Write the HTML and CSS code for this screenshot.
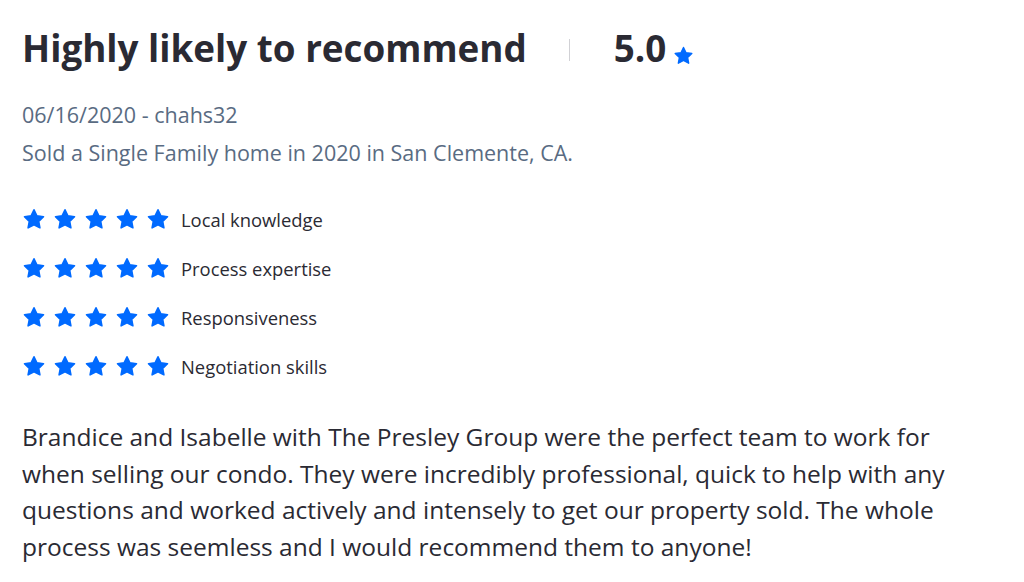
FILE: index.html
```html
<!DOCTYPE html>
<html lang="en">
<head>
<meta charset="utf-8">
<title>Review</title>
<link rel="stylesheet" href="styles.css">
</head>
<body>
<div class="review">
  <div class="head">
    <h1 class="title">Highly likely to recommend</h1>
    <span class="sep"></span>
    <span class="score">5.0</span>
    <svg class="star small" viewBox="0 0 24 24"><path d="M12 2.8l2.9 6 6.6.9-4.8 4.6 1.2 6.5L12 17.7l-5.9 3.1 1.2-6.5-4.8-4.6 6.6-.9z"/></svg>
  </div>
  <div class="meta">
    <div>06/16/2020 - chahs32</div>
    <div>Sold a Single Family home in 2020 in San Clemente, CA.</div>
  </div>
  <ul class="ratings">
    <li><span class="stars"><svg class="star" viewBox="0 0 24 24"><path d="M12 2.8l2.9 6 6.6.9-4.8 4.6 1.2 6.5L12 17.7l-5.9 3.1 1.2-6.5-4.8-4.6 6.6-.9z"/></svg><svg class="star" viewBox="0 0 24 24"><path d="M12 2.8l2.9 6 6.6.9-4.8 4.6 1.2 6.5L12 17.7l-5.9 3.1 1.2-6.5-4.8-4.6 6.6-.9z"/></svg><svg class="star" viewBox="0 0 24 24"><path d="M12 2.8l2.9 6 6.6.9-4.8 4.6 1.2 6.5L12 17.7l-5.9 3.1 1.2-6.5-4.8-4.6 6.6-.9z"/></svg><svg class="star" viewBox="0 0 24 24"><path d="M12 2.8l2.9 6 6.6.9-4.8 4.6 1.2 6.5L12 17.7l-5.9 3.1 1.2-6.5-4.8-4.6 6.6-.9z"/></svg><svg class="star" viewBox="0 0 24 24"><path d="M12 2.8l2.9 6 6.6.9-4.8 4.6 1.2 6.5L12 17.7l-5.9 3.1 1.2-6.5-4.8-4.6 6.6-.9z"/></svg></span><span class="label">Local knowledge</span></li>
    <li><span class="stars"><svg class="star" viewBox="0 0 24 24"><path d="M12 2.8l2.9 6 6.6.9-4.8 4.6 1.2 6.5L12 17.7l-5.9 3.1 1.2-6.5-4.8-4.6 6.6-.9z"/></svg><svg class="star" viewBox="0 0 24 24"><path d="M12 2.8l2.9 6 6.6.9-4.8 4.6 1.2 6.5L12 17.7l-5.9 3.1 1.2-6.5-4.8-4.6 6.6-.9z"/></svg><svg class="star" viewBox="0 0 24 24"><path d="M12 2.8l2.9 6 6.6.9-4.8 4.6 1.2 6.5L12 17.7l-5.9 3.1 1.2-6.5-4.8-4.6 6.6-.9z"/></svg><svg class="star" viewBox="0 0 24 24"><path d="M12 2.8l2.9 6 6.6.9-4.8 4.6 1.2 6.5L12 17.7l-5.9 3.1 1.2-6.5-4.8-4.6 6.6-.9z"/></svg><svg class="star" viewBox="0 0 24 24"><path d="M12 2.8l2.9 6 6.6.9-4.8 4.6 1.2 6.5L12 17.7l-5.9 3.1 1.2-6.5-4.8-4.6 6.6-.9z"/></svg></span><span class="label">Process expertise</span></li>
    <li><span class="stars"><svg class="star" viewBox="0 0 24 24"><path d="M12 2.8l2.9 6 6.6.9-4.8 4.6 1.2 6.5L12 17.7l-5.9 3.1 1.2-6.5-4.8-4.6 6.6-.9z"/></svg><svg class="star" viewBox="0 0 24 24"><path d="M12 2.8l2.9 6 6.6.9-4.8 4.6 1.2 6.5L12 17.7l-5.9 3.1 1.2-6.5-4.8-4.6 6.6-.9z"/></svg><svg class="star" viewBox="0 0 24 24"><path d="M12 2.8l2.9 6 6.6.9-4.8 4.6 1.2 6.5L12 17.7l-5.9 3.1 1.2-6.5-4.8-4.6 6.6-.9z"/></svg><svg class="star" viewBox="0 0 24 24"><path d="M12 2.8l2.9 6 6.6.9-4.8 4.6 1.2 6.5L12 17.7l-5.9 3.1 1.2-6.5-4.8-4.6 6.6-.9z"/></svg><svg class="star" viewBox="0 0 24 24"><path d="M12 2.8l2.9 6 6.6.9-4.8 4.6 1.2 6.5L12 17.7l-5.9 3.1 1.2-6.5-4.8-4.6 6.6-.9z"/></svg></span><span class="label">Responsiveness</span></li>
    <li><span class="stars"><svg class="star" viewBox="0 0 24 24"><path d="M12 2.8l2.9 6 6.6.9-4.8 4.6 1.2 6.5L12 17.7l-5.9 3.1 1.2-6.5-4.8-4.6 6.6-.9z"/></svg><svg class="star" viewBox="0 0 24 24"><path d="M12 2.8l2.9 6 6.6.9-4.8 4.6 1.2 6.5L12 17.7l-5.9 3.1 1.2-6.5-4.8-4.6 6.6-.9z"/></svg><svg class="star" viewBox="0 0 24 24"><path d="M12 2.8l2.9 6 6.6.9-4.8 4.6 1.2 6.5L12 17.7l-5.9 3.1 1.2-6.5-4.8-4.6 6.6-.9z"/></svg><svg class="star" viewBox="0 0 24 24"><path d="M12 2.8l2.9 6 6.6.9-4.8 4.6 1.2 6.5L12 17.7l-5.9 3.1 1.2-6.5-4.8-4.6 6.6-.9z"/></svg><svg class="star" viewBox="0 0 24 24"><path d="M12 2.8l2.9 6 6.6.9-4.8 4.6 1.2 6.5L12 17.7l-5.9 3.1 1.2-6.5-4.8-4.6 6.6-.9z"/></svg></span><span class="label">Negotiation skills</span></li>
  </ul>
  <p class="body">Brandice and Isabelle with The Presley Group were the perfect team to work for when selling our condo. They were incredibly professional, quick to help with any questions and worked actively and intensely to get our property sold. The whole process was seemless and I would recommend them to anyone!</p>
</div>
</body>
</html>
```

FILE: styles.css
```css
html, body {
  margin: 0;
  padding: 0;
  background: #ffffff;
}
body {
  font-family: "Open Sans", "Liberation Sans", sans-serif;
  color: #2a2a33;
}
.review {
  padding: 22px 22px 0 22px;
}
.head {
  display: flex;
  align-items: center;
  height: 52px;
}
.title {
  margin: 0;
  font-size: 36.8px;
  font-weight: 700;
  line-height: 52px;
  color: #2a2a33;
}
.sep {
  width: 1px;
  height: 22px;
  background: #d1d1d5;
  margin: 4px 44px 0 42px;
}
.score {
  font-size: 36.8px;
  font-weight: 700;
  line-height: 52px;
}
.star {
  width: 24px;
  height: 24px;
  display: block;
}
.star path {
  fill: #006aff;
  stroke: #006aff;
  stroke-width: 1.6;
  stroke-linejoin: round;
}
.star.small {
  width: 21px;
  height: 21px;
  margin: 14px 0 0 7px;
}
.meta {
  margin-top: 22px;
  font-size: 21.5px;
  line-height: 38px;
  color: #596b82;
}
.ratings {
  list-style: none;
  margin: 33px 0 0 0;
  padding: 0;
  display: flex;
  flex-direction: column;
  gap: 21px;
}
.ratings li {
  display: flex;
  align-items: center;
  height: 28px;
}
.stars {
  display: flex;
  gap: 7px;
  margin-right: 11px;
}
.label {
  font-size: 18.4px;
  color: #2a2a33;
}
.body {
  margin: 39px 0 0 0;
  font-size: 24.5px;
  line-height: 36.5px;
  color: #2a2a33;
  max-width: 950px;
}
```
